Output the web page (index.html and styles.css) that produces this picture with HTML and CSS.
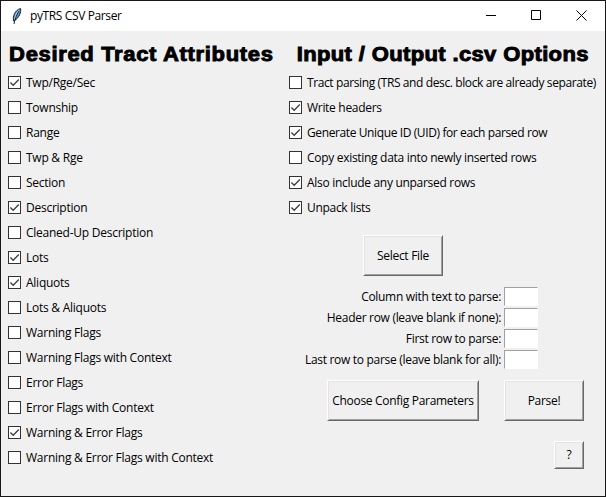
FILE: index.html
```html
<!DOCTYPE html>
<html lang="en">
<head>
<meta charset="utf-8">
<title>pyTRS CSV Parser</title>
<link rel="stylesheet" href="styles.css">
</head>
<body>
<svg width="0" height="0" class="defs"><symbol id="tick" viewBox="0 0 13 13"><path d="M2.400 6.400 5.200 9.200 10.800 3.600" fill="none" stroke="#404040" stroke-width="1.350"/></symbol></svg>
<div class="window">
  <header class="titlebar">
    <svg class="feather" width="10" height="18" viewBox="0 0 10 18">
      <path d="M1.500 14C.8 9 2.500 3.500 8.500 1.500 9.500 5 7 11 2.500 13.500Z" fill="#5a94cf" stroke="#152238" stroke-width="1"/>
      <path d="M6.800 3.500C4.500 6 3.500 9 2.800 12" fill="none" stroke="#b7d7f3" stroke-width="1.200"/>
      <path d="M7 4C4.500 8 3 12 2 17" fill="none" stroke="#111" stroke-width=".9"/>
    </svg>
    <h1 class="title">pyTRS CSV Parser</h1>
    <div class="controls">
      <svg width="10" height="11" viewBox="0 0 10 11"><path d="M0 5.500H10" stroke="#000"/></svg>
      <svg width="10" height="11" viewBox="0 0 10 11"><path d="M.5.5H9.500V9.500H.5Z" fill="none" stroke="#000"/></svg>
      <svg width="11" height="11" viewBox="0 0 11 11"><path d="M.5.5 10.500 10.500M10.500.5.5 10.500" stroke="#000"/></svg>
    </div>
  </header>
  <main class="content">
    <section class="attributes">
      <h2 class="heading">Desired Tract Attributes</h2>
      <div class="check"><span class="box"><svg><use href="#tick"/></svg></span><span>Twp/Rge/Sec</span></div>
      <div class="check"><span class="box"></span><span>Township</span></div>
      <div class="check"><span class="box"></span><span>Range</span></div>
      <div class="check"><span class="box"></span><span>Twp &amp; Rge</span></div>
      <div class="check"><span class="box"></span><span>Section</span></div>
      <div class="check"><span class="box"><svg><use href="#tick"/></svg></span><span>Description</span></div>
      <div class="check"><span class="box"></span><span>Cleaned-Up Description</span></div>
      <div class="check"><span class="box"><svg><use href="#tick"/></svg></span><span>Lots</span></div>
      <div class="check"><span class="box"><svg><use href="#tick"/></svg></span><span>Aliquots</span></div>
      <div class="check"><span class="box"></span><span>Lots &amp; Aliquots</span></div>
      <div class="check"><span class="box"></span><span>Warning Flags</span></div>
      <div class="check"><span class="box"></span><span>Warning Flags with Context</span></div>
      <div class="check"><span class="box"></span><span>Error Flags</span></div>
      <div class="check"><span class="box"></span><span>Error Flags with Context</span></div>
      <div class="check"><span class="box"><svg><use href="#tick"/></svg></span><span>Warning &amp; Error Flags</span></div>
      <div class="check"><span class="box"></span><span>Warning &amp; Error Flags with Context</span></div>
    </section>
    <section class="options">
      <h2 class="heading heading-io">Input / Output .csv Options</h2>
      <div class="check tight"><span class="box"></span><span>Tract parsing (TRS and desc. block are already separate)</span></div>
      <div class="check"><span class="box"><svg><use href="#tick"/></svg></span><span>Write headers</span></div>
      <div class="check tight"><span class="box"><svg><use href="#tick"/></svg></span><span>Generate Unique ID (UID) for each parsed row</span></div>
      <div class="check"><span class="box"></span><span>Copy existing data into newly inserted rows</span></div>
      <div class="check"><span class="box"><svg><use href="#tick"/></svg></span><span>Also include any unparsed rows</span></div>
      <div class="check"><span class="box"><svg><use href="#tick"/></svg></span><span>Unpack lists</span></div>
      <button class="button select">Select File</button>
      <div class="fields">
        <label>Column with text to parse:</label><input class="entry">
        <label>Header row (leave blank if none):</label><input class="entry">
        <label>First row to parse:</label><input class="entry">
        <label>Last row to parse (leave blank for all):</label><input class="entry">
      </div>
      <div class="actions">
        <button class="button config">Choose Config Parameters</button>
        <button class="button">Parse!</button>
      </div>
      <button class="button help">?</button>
    </section>
  </main>
</div>
</body>
</html>
```
FILE: styles.css
```css
* { box-sizing: border-box; }
body {
  margin: 0;
  font: 12px/16px "Open Sans", "Noto Sans", sans-serif;
  letter-spacing: -0.25px;
  color: #000;
}
.defs { position: absolute; }
.window {
  width: 606px;
  height: 497px;
  border: 1px solid #171717;
  background: #f0f0f0;
  overflow: hidden;
}
.titlebar {
  display: flex;
  align-items: center;
  height: 30px;
  padding: 0 18px 0 11px;
  background: #fff;
}
.feather { margin-right: 8px; margin-top: -1px; }
.title { margin: 0; font-size: 12px; font-weight: 400; line-height: 16px; letter-spacing: -0.38px; }
.controls { display: flex; align-items: center; gap: 35px; margin-left: auto; margin-top: -1px; }
.controls svg { display: block; }
.content { display: grid; grid-template-columns: 281px 1fr; padding-left: 7px; }
.heading {
  height: 39px;
  margin: 0;
  padding: 11px 0 0 1px;
  font: bold 20px/24px "Liberation Sans", Arial, sans-serif;
  letter-spacing: 0.600px;
  -webkit-text-stroke: 0.900px #000;
  transform: scaleX(1.1);
  transform-origin: left;
  white-space: nowrap;
}
.heading-io { padding-left: 7px; letter-spacing: 0.330px; }
.check { display: flex; align-items: center; gap: 5px; height: 25px; white-space: nowrap; }
.options { letter-spacing: -0.300px; }
.tight { letter-spacing: -0.390px; }
.box { width: 13px; height: 13px; flex: none; border: 1px solid #333; background: #fff; }
.box svg { display: block; width: 13px; height: 13px; margin: -1px; }
.button {
  width: 80px;
  height: 41px;
  padding: 0;
  border: 1px solid;
  border-color: #fff #696969 #696969 #fff;
  box-shadow: inset 1px 1px #e3e3e3, inset -1px -1px #a0a0a0;
  background: #f0f0f0;
  font: inherit;
  letter-spacing: inherit;
  color: #000;
  white-space: nowrap;
}
.select { display: block; margin: 15px 0 0 74px; }
.fields {
  display: grid;
  grid-template-columns: 212px 34px;
  grid-auto-rows: 19px;
  gap: 2px 3px;
  margin-top: 11px;
  text-align: right;
}
.fields label { line-height: 19px; white-space: nowrap; }
.entry {
  width: 34px;
  height: 19px;
  border: 1px solid;
  border-color: #a0a0a0 #fff #fff #a0a0a0;
  padding: 0;
  background: #fff;
}
.actions { display: flex; gap: 25px; margin: 11px 0 0 38px; }
.config { width: 152px; }
.help { display: block; width: 30px; height: 28px; margin: 20px 0 0 265px; }
```
